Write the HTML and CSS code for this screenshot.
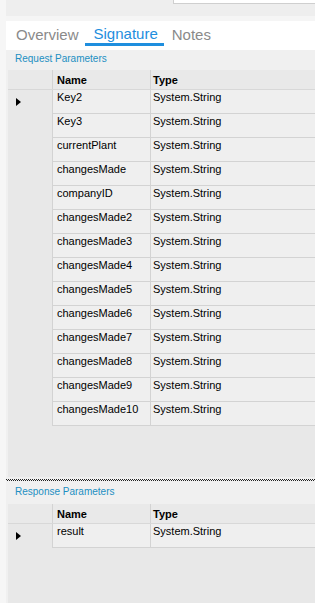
FILE: index.html
```html
<!DOCTYPE html>
<html>
<head>
<meta charset="utf-8">
<link rel="stylesheet" href="styles.css">
</head>
<body>
<div class="app">
  <div class="topbar"><div class="topbox"></div></div>
  <div class="band"></div>
  <div class="tabs">
    <span class="tab">Overview</span>
    <span class="tab active">Signature</span>
    <span class="tab">Notes</span>
  </div>
  <div class="section-title">Request Parameters</div>
  <div class="grid req">
    <div class="row head">
      <div class="rh"></div><div class="c name">Name</div><div class="c type">Type</div>
    </div>
    <div class="row"><div class="rh"><span class="arrow"></span></div><div class="c name">Key2</div><div class="c type">System.String</div></div>
    <div class="row"><div class="rh"></div><div class="c name">Key3</div><div class="c type">System.String</div></div>
    <div class="row"><div class="rh"></div><div class="c name">currentPlant</div><div class="c type">System.String</div></div>
    <div class="row"><div class="rh"></div><div class="c name">changesMade</div><div class="c type">System.String</div></div>
    <div class="row"><div class="rh"></div><div class="c name">companyID</div><div class="c type">System.String</div></div>
    <div class="row"><div class="rh"></div><div class="c name">changesMade2</div><div class="c type">System.String</div></div>
    <div class="row"><div class="rh"></div><div class="c name">changesMade3</div><div class="c type">System.String</div></div>
    <div class="row"><div class="rh"></div><div class="c name">changesMade4</div><div class="c type">System.String</div></div>
    <div class="row"><div class="rh"></div><div class="c name">changesMade5</div><div class="c type">System.String</div></div>
    <div class="row"><div class="rh"></div><div class="c name">changesMade6</div><div class="c type">System.String</div></div>
    <div class="row"><div class="rh"></div><div class="c name">changesMade7</div><div class="c type">System.String</div></div>
    <div class="row"><div class="rh"></div><div class="c name">changesMade8</div><div class="c type">System.String</div></div>
    <div class="row"><div class="rh"></div><div class="c name">changesMade9</div><div class="c type">System.String</div></div>
    <div class="row"><div class="rh"></div><div class="c name">changesMade10</div><div class="c type">System.String</div></div>
  </div>
  <div class="splitter"></div>
  <div class="section-title resp">Response Parameters</div>
  <div class="grid res">
    <div class="row head">
      <div class="rh"></div><div class="c name">Name</div><div class="c type">Type</div>
    </div>
    <div class="row"><div class="rh"><span class="arrow"></span></div><div class="c name">result</div><div class="c type">System.String</div></div>
  </div>
</div>
</body>
</html>
```
FILE: styles.css
```css
html, body {
  margin: 0;
  padding: 0;
  background: #f6f6f6;
  font-family: "Liberation Sans", Arial, sans-serif;
  overflow: hidden;
}
.app {
  margin-left: 6px;
  width: 309px;
  height: 603px;
  background: #f0f0f0;
  display: flex;
  flex-direction: column;
}
.topbar {
  height: 16px;
  flex: none;
  background: #eeeeee;
  position: relative;
}
.topbox {
  position: absolute;
  left: 167px;
  top: -2px;
  right: -4px;
  height: 4px;
  background: #fff;
  border: 1px solid #cfcfcf;
}
.band {
  height: 5px;
  flex: none;
  background: #f5f5f5;
}
.tabs {
  height: 29px;
  flex: none;
  background: #ffffff;
  display: flex;
  align-items: flex-start;
  padding-left: 4px;
  box-sizing: border-box;
}
.tab {
  font-size: 15px;
  color: #8a8a8a;
  padding: 5px 6px 0;
  height: 22px;
  box-sizing: border-box;
}
.tab.active {
  color: #1e8ede;
  border-bottom: 3px solid #1e8ede;
  height: 25px;
  padding: 4px 6px 0 9px;
  margin: 0 2px 0 0;
}
.section-title {
  height: 20px;
  flex: none;
  line-height: 18px;
  font-size: 10px;
  color: #1c8fc2;
  padding-left: 9px;
  background: #f0f0f0;
}
.grid {
  margin-left: 2px;
  background: #e8e8e8;
}
.grid.req {
  height: 407px;
  flex: none;
}
.grid.res {
  flex: 1;
}
.row {
  display: flex;
  height: 24px;
  font-size: 11px;
  color: #000;
}
.row.head {
  height: 19px;
  line-height: 20px;
  font-weight: bold;
  background: #e9e9e9;
  border-bottom: 1px solid #d8d8d8;
}
.rh {
  width: 44px;
  position: relative;
}
.c {
  box-sizing: border-box;
  padding: 1px 0 0 4px;
  border-left: 1px solid #d3d3d3;
}
.row:not(.head) .c {
  background: #efefef;
  border-bottom: 1px solid #d3d3d3;
  line-height: 12px;
}
.row.head .c {
  padding-top: 0;
}
.name {
  width: 98px;
}
.type {
  flex: 1;
  padding-left: 2px !important;
}
.arrow {
  position: absolute;
  left: 8px;
  top: 8px;
  width: 0;
  height: 0;
  border-top: 4px solid transparent;
  border-bottom: 4px solid transparent;
  border-left: 5px solid #000;
}
.splitter {
  height: 2px;
  flex: none;
  margin-top: 2px;
  background-image:
    repeating-linear-gradient(90deg, #222 0 1px, transparent 1px 2px),
    repeating-linear-gradient(90deg, transparent 0 1px, #222 1px 2px);
  background-size: 100% 1px, 100% 1px;
  background-position: 0 0, 0 1px;
  background-repeat: no-repeat;
}
.section-title.resp {
  height: 23px;
  line-height: 22px;
}
```
